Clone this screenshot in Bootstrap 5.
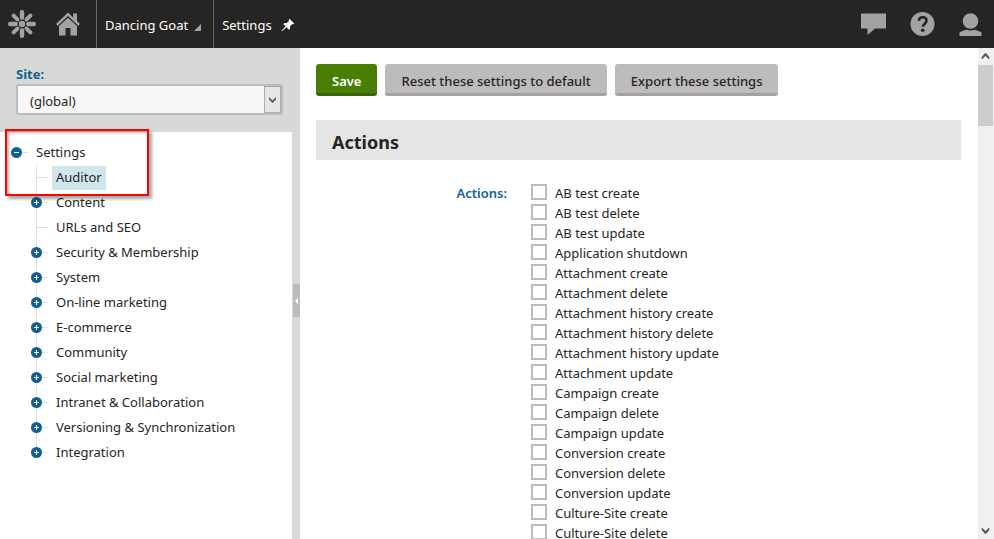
<!DOCTYPE html>
<html lang="en">
<head>
<meta charset="utf-8">
<meta name="viewport" content="width=device-width, initial-scale=1">
<title>Settings</title>
<link rel="stylesheet" href="https://cdn.jsdelivr.net/npm/bootstrap@5.3.0/dist/css/bootstrap.min.css">
<style>
body { font-family: "Noto Sans", "Open Sans", sans-serif; font-size: 13px; line-height: 20px; color: #262524; background: #fff; }
a { color: inherit; text-decoration: none; }
.topbar { height: 48px; background: #262524; color: #fff; font-size: 13px; }
.topbar svg { display: block; fill: #a3a2a2; }
.topbar .crumb { border-left: 1px solid #696867; padding: 2px 12px 0 8px; gap: 6px; }
.topbar .crumb .pin { fill: #fff; margin-left: 3px; }
.side { width: 292px; }
.site-panel { background: #d6d9d6; padding: 16px 9px 17px 16px; }
.site-panel label { color: #0f6194; font-weight: 700; line-height: 20px; display: block; }
.site-select { display: block; appearance: none; width: 100%; height: 31px; border: 2px solid #bdbbbb; border-radius: 3px; padding: 3px 24px 0 12px; color: #262524;
  background: #f7f7f7 url("data:image/svg+xml,%3Csvg xmlns='http://www.w3.org/2000/svg' width='17' height='27'%3E%3Crect x='.5' y='.5' width='16' height='26' fill='%23e6e6e6' stroke='%23acacac'/%3E%3Cpath d='M5 11l3.500 3.500L12 11v2.500L8.500 17 5 13.500z' fill='%23555'/%3E%3C/svg%3E") no-repeat right 0 top 0; }
.tree { padding: 8px 8px 0 11px; }
.tree ul { margin: 0; padding: 0; list-style: none; }
.tree .branch { margin-left: 20px; background: linear-gradient(#e0e0e0, #e0e0e0) no-repeat 5px 0 / 1px calc(100% - 13px); }
.tree-row { height: 25px; }
.tree-row .toggle { border: 0; background: none; padding: 0; width: 11px; height: 11px; }
.tree-row .toggle svg { display: block; }
.tree-row .leaf { width: 11px; height: 1px; background: linear-gradient(#e0e0e0, #e0e0e0) no-repeat 5px 0; }
.tree-row .dash { width: 6px; height: 1px; background: #e0e0e0; }
.tree-row a { margin-left: 4px; padding: 1px 4px 3px; }
.tree-row a.current { background: #cfe6ec; }
.splitter { width: 8px; background: #d6d9d6; padding-top: 14px; }
.splitter button { width: 7px; height: 33px; border: 0; padding: 0; background: #bdbbbb; }
.splitter svg { display: block; margin: 0 auto; }
.callout { left: 5px; top: 129px; width: 144px; height: 67px; border: 2px solid #ff0000; box-shadow: 3px 3px 3px rgba(0,0,0,.35), inset 2px 2px 3px rgba(0,0,0,.3); pointer-events: none; }
.content-area { padding: 16px 17px 0 16px; }
.btn-flat { border: 0; border-bottom: 3px solid #a3a2a2; border-radius: 3px; background: #bdbbbb; color: #262524; font-size: 13px; font-weight: 500; line-height: 20px; padding: 7px 16px 2px; }
.btn-flat.save { background: #497d04; border-color: #3b6503; color: #fff; font-weight: 600; }
.section-title { background: #e5e5e5; margin: 24px 0 22px; height: 40px; padding: 2px 16px 0; font-size: 18px; font-weight: 700; line-height: 40px; }
.field-label { color: #0f6194; font-weight: 600; padding-top: 1px; }
.check-row { height: 20px; gap: 8px; }
.check-row input { appearance: none; width: 16px; height: 16px; margin: 2px 0 0; border: 2px solid #bdbbbb; background: #fff; flex: none; }
.check-row input:checked { background: #0f6194; }
.check-row label { padding-top: 1px; white-space: nowrap; }
.vscroll { width: 16px; background: #f0f0f0; }
.vscroll svg { display: block; }
.vscroll .thumb { height: 61px; width: 15px; background: #cdcdcd; }
</style>
<script src="https://cdn.jsdelivr.net/npm/bootstrap@5.3.0/dist/js/bootstrap.bundle.min.js"></script>
</head>
<body class="vh-100 d-flex flex-column overflow-hidden position-relative">
<header class="topbar d-flex align-items-stretch flex-shrink-0">
  <a href="#" class="d-flex align-items-center ps-2" aria-label="Dashboard">
    <svg width="28" height="28" viewBox="0 0 28 28"><g fill="none" stroke="#a3a2a2" stroke-width="4.400" stroke-linecap="round"><path d="M14 2.200v5.600M14 20.200v5.600M2.200 14h5.600M20.200 14h5.600"/><path stroke-width="4" d="M5.600 5.600l3.800 3.800M18.600 18.600l3.800 3.800M22.400 5.600l-3.800 3.800M9.400 18.600l-3.800 3.800"/><path stroke-width="2" stroke-linecap="butt" d="M14 7v3M14 18v3M7 14h3M18 14h3M9 9l2 2M17 17l2 2M19 9l-2 2M11 17l-2 2"/></g><circle cx="14" cy="14" r="4.400" fill="#262524"/><circle cx="14" cy="14" r="3.200"/></svg>
  </a>
  <a href="#" class="d-flex align-items-center px-3 ms-1" aria-label="Home">
    <svg width="24" height="24" viewBox="0 0 24 24"><path d="M12 .5L0 12l1.700 1.700L12 4l10.300 9.700L24 12l-3-2.900V1.500h-3.800v4z"/><path d="M12 5.800L3 14v9.500h6.500V16h5v7.500H21V14z"/></svg>
  </a>
  <a href="#" class="crumb d-flex align-items-center">Dancing Goat
    <svg class="mt-1" width="7" height="7" viewBox="0 0 7 7"><path d="M7 0v7H0z"/></svg>
  </a>
  <a href="#" class="crumb d-flex align-items-center">Settings
    <svg class="pin" width="14" height="14" viewBox="0 0 14 14"><path d="M8.500.8l4.700 4.700-1.200.9-.8-.4-2.300 2.400c.4 1.400 0 2.600-.8 3.400L5.400 9.200 1 13.200l-.5-.5L4.600 8.300 2.200 5.900c1-.9 2.200-1.100 3.400-.7L8 2.900l-.4-.9z"/></svg>
  </a>
  <div class="d-flex align-items-center ms-auto pe-2">
    <a href="#" class="me-4" aria-label="Messages"><svg width="25" height="22" viewBox="0 0 25 22"><path d="M0 .5h25v15H14L6.500 22v-6.500H0z"/></svg></a>
    <a href="#" class="me-4" aria-label="Help"><svg width="25" height="24" viewBox="0 0 25 24"><circle cx="12.500" cy="12" r="12"/><path d="M8.800 8.800c.2-2.500 1.700-3.500 3.900-3.500 2.300 0 3.800 1.200 3.800 3.300 0 3-3.500 3.100-3.600 6.200" fill="none" stroke="#262524" stroke-width="2.600"/><circle cx="12.700" cy="18.300" r="1.800" fill="#262524"/></svg></a>
    <a href="#" class="me-1" aria-label="User"><svg width="23" height="23" viewBox="0 0 23 23"><circle cx="11.500" cy="8" r="7.800"/><path d="M.5 23v-3.500c2.500-1.500 4-2 7-2.800 2.500 1 5.500 1 8 0 3 .8 4.500 1.300 7 2.800V23z"/></svg></a>
  </div>
</header>
<div class="d-flex flex-grow-1 overflow-hidden">
  <aside class="side flex-shrink-0">
    <div class="site-panel">
      <label for="site">Site:</label>
      <select id="site" class="site-select"><option>(global)</option></select>
    </div>
    <nav class="tree" aria-label="Settings categories" id="tree"></nav>
  </aside>
  <div class="splitter d-flex align-items-center justify-content-end flex-shrink-0">
    <button type="button" aria-label="Collapse panel"><svg width="3" height="6" viewBox="0 0 3 6"><path d="M3 0v6L0 3z" fill="#fff"/></svg></button>
  </div>
  <main class="content-area flex-grow-1 overflow-hidden">
    <div class="d-flex gap-2">
      <button type="button" class="btn-flat save">Save</button>
      <button type="button" class="btn-flat">Reset these settings to default</button>
      <button type="button" class="btn-flat">Export these settings</button>
    </div>
    <h2 class="section-title">Actions</h2>
    <div class="row g-0" role="group" aria-labelledby="actions-label">
      <div class="col-4 text-end pe-4"><div class="field-label" id="actions-label">Actions:</div></div>
      <div class="col-8" id="actions"></div>
    </div>
  </main>
  <div class="vscroll flex-shrink-0 d-flex flex-column" aria-hidden="true">
    <svg width="15" height="17" viewBox="0 0 15 17"><path d="M4 11V9l3.500-4L11 9v2L7.500 7.700z" fill="#555" stroke="#555" stroke-width=".6"/></svg>
    <div class="thumb"></div>
    <svg class="mt-auto" width="15" height="17" viewBox="0 0 15 17"><path d="M4 6v2l3.500 4L11 8V6L7.500 9.300z" fill="#555" stroke="#555" stroke-width=".6"/></svg>
  </div>
</div>
<div class="callout position-absolute"></div>
<script>
const icon = open => `<svg width="11" height="11" viewBox="0 0 11 11"><circle cx="5.500" cy="5.500" r="5.500" fill="#0f6194"/><path d="M3 5.500h5${open ? '' : 'M5.500 3v5'}" stroke="#fff" stroke-width="1"/></svg>`;
const row = (text, kind) => `<div class="tree-row d-flex align-items-center">${kind === 'leaf' ? '<span class="leaf"></span>' : `<button type="button" class="toggle" aria-label="Toggle ${text.replace('&', '&amp;')}">${icon(kind === 'open')}</button>`}<span class="dash"></span><a href="#"${text === 'Auditor' ? ' class="current"' : ''}>${text.replace('&', '&amp;')}</a></div>`;
const leaves = ['Auditor', 'URLs and SEO'];
const nodes = ['Auditor', 'Content', 'URLs and SEO', 'Security & Membership', 'System', 'On-line marketing', 'E-commerce', 'Community', 'Social marketing', 'Intranet & Collaboration', 'Versioning & Synchronization', 'Integration'];
document.getElementById('tree').innerHTML = `<ul><li>${row('Settings', 'open')}<ul class="branch">${nodes.map(n => `<li>${row(n, leaves.includes(n) ? 'leaf' : 'closed')}</li>`).join('')}</ul></li></ul>`;
const actions = ['AB test create', 'AB test delete', 'AB test update', 'Application shutdown', 'Attachment create', 'Attachment delete', 'Attachment history create', 'Attachment history delete', 'Attachment history update', 'Attachment update', 'Campaign create', 'Campaign delete', 'Campaign update', 'Conversion create', 'Conversion delete', 'Conversion update', 'Culture-Site create', 'Culture-Site delete'];
document.getElementById('actions').innerHTML = actions.map((a, i) => `<div class="check-row d-flex align-items-start"><input type="checkbox" id="action-${i}"><label for="action-${i}">${a}</label></div>`).join('');
</script>
</body>
</html>
